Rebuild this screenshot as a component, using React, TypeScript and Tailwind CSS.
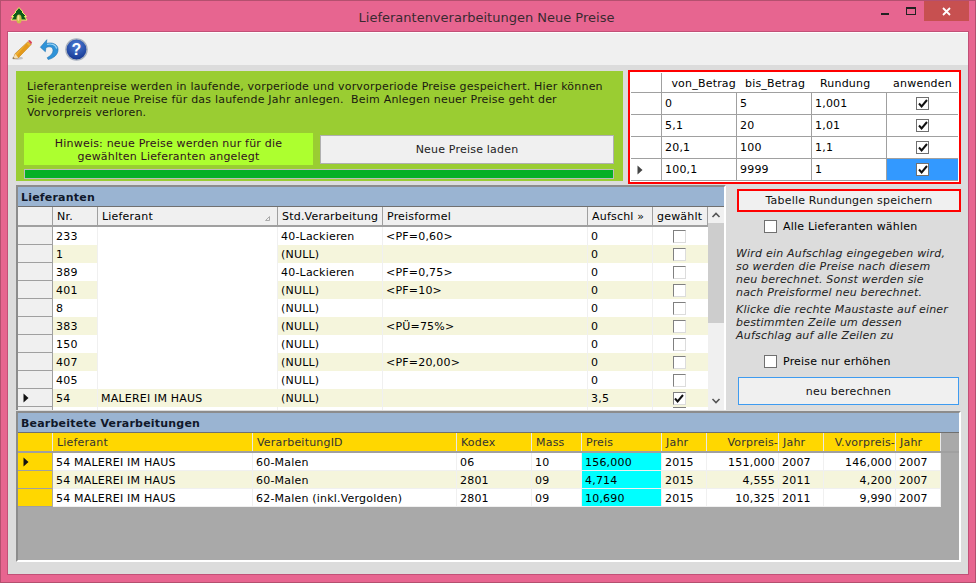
const lieferanten = [
  { nr: "233", name: "", std: "40-Lackieren", formel: "<PF=0,60>", auf: "0" },
  { nr: "1", name: "", std: "(NULL)", formel: "", auf: "0" },
  { nr: "389", name: "", std: "40-Lackieren", formel: "<PF=0,75>", auf: "0" },
  { nr: "401", name: "", std: "(NULL)", formel: "<PF=10>", auf: "0" },
  { nr: "8", name: "", std: "(NULL)", formel: "", auf: "0" },
  { nr: "383", name: "", std: "(NULL)", formel: "<PÜ=75%>", auf: "0" },
  { nr: "150", name: "", std: "(NULL)", formel: "", auf: "0" },
  { nr: "407", name: "", std: "(NULL)", formel: "<PF=20,00>", auf: "0" },
  { nr: "405", name: "", std: "(NULL)", formel: "", auf: "0" },
  { nr: "54", name: "MALEREI IM HAUS", std: "(NULL)", formel: "", auf: "3,5", checked: true },
];

const rundungen = [
  ["0", "5", "1,001"],
  ["5,1", "20", "1,01"],
  ["20,1", "100", "1,1"],
  ["100,1", "9999", "1"],
];

const verarbeitungen = [
  ["54 MALEREI IM HAUS", "60-Malen", "06", "10", "156,000", "2015", "151,000", "2007", "146,000", "2007"],
  ["54 MALEREI IM HAUS", "60-Malen", "2801", "09", "4,714", "2015", "4,555", "2011", "4,200", "2007"],
  ["54 MALEREI IM HAUS", "62-Malen (inkl.Vergolden)", "2801", "09", "10,690", "2015", "10,325", "2011", "9,990", "2007"],
];

const verarbHead = ["Lieferant", "VerarbeitungID", "Kodex", "Mass", "Preis", "Jahr", "Vorpreis-", "Jahr", "V.vorpreis-", "Jahr"];

function Arrow({ className = "text-[#111]" }: { className?: string }) {
  return (
    <svg width="6" height="10" viewBox="0 0 6 10" className={className}>
      <path d="M0.5 0.5 L5.5 5 L0.5 9.5 Z" fill="currentColor" />
    </svg>
  );
}

function Check() {
  return (
    <svg width="10" height="9" viewBox="0 0 10 9">
      <path d="M1 4.5 L3.6 7.4 L9 1" fill="none" stroke="#111" strokeWidth="2" />
    </svg>
  );
}

function Box({ checked, className = "border-[#707070]" }: { checked?: boolean; className?: string }) {
  return (
    <div className={`flex h-[13px] w-[13px] items-center justify-center border bg-white ${className}`}>
      {checked && <Check />}
    </div>
  );
}

function Logo() {
  return (
    <svg width="18" height="17" viewBox="0 0 18 17">
      <path d="M9 0.5 L13 5 L12 5 L16.5 9.5 L14.5 9.5 L17 13 L1 13 L3.5 9.5 L1.5 9.5 L6 5 L5 5 Z" fill="#0b5a1a" stroke="#f2ee6a" strokeWidth="1" />
      <ellipse cx="9" cy="12" rx="2.6" ry="4.6" fill="#cdbf4a" />
      <ellipse cx="8.4" cy="11" rx="1" ry="3" fill="#efe89a" />
    </svg>
  );
}

function PencilIcon() {
  return (
    <svg width="22" height="23" viewBox="0 0 24 24">
      <ellipse cx="7" cy="21.5" rx="6" ry="1.6" fill="#c4c4c4" />
      <path d="M18.5 3.5 L22 6.5 L8 21 L2.5 22 L4.5 16.5 Z" fill="#f0b030" stroke="#b87a18" strokeWidth="0.7" />
      <path d="M17 5.5 L20 8.5 L8 21 L6 19 Z" fill="#e39a1c" />
      <path d="M4.5 16.5 L8 21 L2.5 22 Z" fill="#f3dfb4" />
      <path d="M2.9 20.5 L4 21.7 L2.5 22 Z" fill="#333" />
      <path d="M18.5 2.5 L20.5 1.5 L23 4 L22 6.5 Z" fill="#d9455a" />
    </svg>
  );
}

function UndoIcon() {
  return (
    <svg width="20" height="23" viewBox="0 0 22 24">
      <path d="M1.5 9.5 L7 14.5 L7.6 10 C11 8.2 15.4 9 15.4 12.8 C15.4 16.6 12.4 19 9 21 L10 23 C15.5 22 21 18 21 12 C21 5.6 13.5 3.6 8.2 5.4 L8.6 1.2 Z" fill="#2f93d8" stroke="#1b6fae" strokeWidth="0.6" />
      <path d="M9 6.4 C13 5 18.6 6.6 19.4 11" fill="none" stroke="#9fd6f5" strokeWidth="1.2" />
    </svg>
  );
}

function HelpIcon() {
  return (
    <svg width="23" height="23" viewBox="0 0 23 23">
      <defs>
        <radialGradient id="helpFill" cx="50%" cy="30%" r="75%">
          <stop offset="0%" stopColor="#4d7fd6" />
          <stop offset="100%" stopColor="#10308c" />
        </radialGradient>
      </defs>
      <circle cx="11.5" cy="11.5" r="10.6" fill="url(#helpFill)" stroke="#a8b0bd" strokeWidth="1.4" />
      <text x="11.5" y="17" textAnchor="middle" fontSize="16" fontWeight="700" fill="#fff" fontFamily="Liberation Sans, sans-serif">?</text>
    </svg>
  );
}

function RundungenTable() {
  const cols = "grid grid-cols-[31px_75px_75px_75px_71px]";
  return (
    <div className="h-[114px] w-[333px] border-2 border-[#ff0000] bg-white p-[1px]">
      <div className={`${cols} h-[20px] border-b border-[#a0a0a0]`}>
        <div className="border-r border-[#a0a0a0]" />
        <div className="flex items-center justify-end pr-[1px] pt-[1px]">von_Betrag</div>
        <div className="flex items-center pl-[8px] pt-[1px]">bis_Betrag</div>
        <div className="flex items-center pl-[8px] pt-[1px]">Rundung</div>
        <div className="flex items-center justify-center pt-[1px]">anwenden</div>
      </div>
      {rundungen.map((row, i) => (
        <div key={i} className={`${cols} h-[22px] border-b border-[#a0a0a0]`}>
          <div className="flex items-center border-r border-[#a0a0a0] pl-[6px]">
            {i === 3 && <Arrow className="text-[#444]" />}
          </div>
          {row.map((v, j) => (
            <div key={j} className="flex items-center border-r border-[#a0a0a0] pl-[3px]">{v}</div>
          ))}
          <div className={`flex items-center justify-center ${i === 3 ? "bg-[#3399ff]" : ""}`}>
            <Box checked />
          </div>
        </div>
      ))}
    </div>
  );
}

function LieferantenGrid() {
  const cols = "grid grid-cols-[35px_45px_180px_105px_205px_65px_55px]";
  const head = ["Nr.", "Lieferant", "Std.Verarbeitung", "Preisformel", "Aufschl »", "gewählt"];
  return (
    <div className="h-[225px] w-[710px] overflow-hidden border-2 border-b-0 border-[#8c8c8c] border-r-white bg-white">
      <div className="flex h-[20px] items-center border-b border-[#707070] bg-[#9ab4d2] pl-[3px] pt-[1px] font-bold text-[#10182a]">Lieferanten</div>
      <div className="flex h-[203px]">
        <div className="w-[690px] overflow-hidden">
          <div className={`${cols} h-[20px] border-b-2 border-[#a0a0a0] bg-[#f0f0f0]`}>
            <div className="border-r border-[#a0a0a0]" />
            {head.map((h, i) => (
              <div key={h} className="flex items-center whitespace-nowrap border-r border-[#a0a0a0] pl-[4px]">
                {h}
                {i === 1 && (
                  <svg width="5" height="5" viewBox="0 0 5 5" className="ml-auto mr-[7px] mt-[5px]">
                    <path d="M4.5 0.5 L4.5 4.5 L0.5 4.5 Z" fill="none" stroke="#aaa" strokeWidth="1" />
                  </svg>
                )}
              </div>
            ))}
          </div>
          {lieferanten.map((r, i) => (
            <div key={i} className={`${cols} h-[18px] ${i % 2 ? "bg-[#f5f5dc]" : "bg-white"}`}>
              <div className="flex items-center border-b border-r border-[#a0a0a0] bg-[#f0f0f0] pl-[5px]">
                {i === 9 && <Arrow />}
              </div>
              <div className="flex items-center border-r border-[#f0f0f0] pl-[3px]">{r.nr}</div>
              <div className="flex items-center border-r border-[#f0f0f0] bg-white pl-[3px]">
                {r.name ? <span className="-mx-[3px] flex h-full w-[180px] items-center bg-[#f5f5dc] pl-[3px]">{r.name}</span> : null}
              </div>
              <div className="flex items-center border-r border-[#f0f0f0] pl-[3px]">{r.std}</div>
              <div className="flex items-center border-r border-[#f0f0f0] pl-[3px]">{r.formel}</div>
              <div className="flex items-center border-r border-[#f0f0f0] pl-[3px]">{r.auf}</div>
              <div className="flex items-center justify-center pr-[3px]">
                <Box checked={r.checked} className="border-[#808080] border-b-[#dcdcdc] border-r-[#dcdcdc]" />
              </div>
            </div>
          ))}
          <div className={`${cols} h-[4px] bg-white`}>
            <div className="border-r border-[#a0a0a0] bg-[#f0f0f0]" />
            <div className="border-r border-[#f0f0f0]" />
            <div className="border-r border-[#f0f0f0]" />
            <div className="border-r border-[#f0f0f0]" />
            <div className="border-r border-[#f0f0f0]" />
            <div className="border-r border-[#f0f0f0]" />
            <div className="flex justify-center pr-[3px]"><div className="h-[4px] w-[13px] border-t border-[#808080]" /></div>
          </div>
        </div>
        <div className="flex w-[16px] flex-col items-center bg-[#f0f0f0]">
          <svg width="10" height="16" viewBox="0 0 10 16"><path d="M1.5 10 L5 6.5 L8.5 10" fill="none" stroke="#555" strokeWidth="1.6" /></svg>
          <div className="h-[100px] w-full bg-[#cdcdcd]" />
          <div className="flex-1" />
          <svg width="10" height="18" viewBox="0 0 10 18"><path d="M1.5 7 L5 10.5 L8.5 7" fill="none" stroke="#555" strokeWidth="1.6" /></svg>
        </div>
      </div>
    </div>
  );
}

function VerarbeitungenGrid() {
  const cols = "grid grid-cols-[35px_200px_204px_75px_50px_80px_45px_72px_45px_72px_45px]";
  return (
    <div className="flex h-[151px] w-[945px] flex-col border-2 border-[#8c8c8c] border-b-white border-r-white bg-[#a9a9a9]">
      <div className="flex h-[20px] shrink-0 items-center border-b border-[#707070] bg-[#9ab4d2] pl-[3px] pt-[1px] font-bold text-[#10182a]">Bearbeitete Verarbeitungen</div>
      <div className={`${cols} h-[20px] border-b-2 border-[#a0a0a0] bg-[#a9a9a9]`}>
        <div className="border-r border-[#e8e8e8] bg-[#ffd700]" />
        {verarbHead.map((h, i) => (
          <div key={i} className={`flex items-center whitespace-nowrap border-r border-[#e8e8e8] bg-[#ffd700] pt-[1px] text-[#333] ${h.endsWith("-") ? "justify-end" : "pl-[4px]"}`}>{h}</div>
        ))}
      </div>
      {verarbeitungen.map((row, i) => (
        <div key={i} className={`${cols} h-[18px]`}>
          <div className="mr-[1px] flex items-center border-b border-[#a0a0a0] bg-[#ffd700] pl-[5px]">
            {i === 0 && <Arrow />}
          </div>
          {row.map((v, j) => {
            const right = j === 6 || j === 8;
            const bg = j === 4 ? "bg-[#00ffff]" : i % 2 ? "bg-[#f5f5dc]" : "bg-white";
            return (
              <div key={j} className={`flex items-center border-b border-r border-[#f0f0f0] pt-[1px] ${bg} ${right ? "justify-end pr-[3px]" : "pl-[3px]"}`}>{v}</div>
            );
          })}
        </div>
      ))}
    </div>
  );
}

export default function App() {
  return (
    <div className="flex h-[583px] w-[976px] flex-col overflow-hidden border border-[#b4506f] bg-[#e76590] font-['DejaVu_Sans',sans-serif] text-[11px] leading-[13px] tracking-[0.2px] text-black">
      <div className="flex h-[30px] shrink-0 items-start">
        <div className="ml-[9px] mt-[6px]"><Logo /></div>
        <div className="flex-1 pl-[74px] pt-[9px] text-center text-[13px] leading-[15px] tracking-normal text-[#3a2a30]">Lieferantenverarbeitungen Neue Preise</div>
        <div className="mr-[1px] flex items-start">
          <div className="flex h-[20px] w-[27px] items-end justify-center pb-[6px]"><div className="h-[2px] w-[8px] bg-[#222]" /></div>
          <div className="flex h-[20px] w-[26px] items-center justify-center"><div className="h-[8px] w-[10px] border border-t-2 border-[#222]" /></div>
          <div className="flex h-[20px] w-[45px] items-center justify-center bg-[#c75050]">
            <svg width="9" height="9" viewBox="0 0 9 9"><path d="M1 1 L8 8 M8 1 L1 8" stroke="#fff" strokeWidth="1.8" /></svg>
          </div>
          <div className="w-[5px]" />
        </div>
      </div>
      <div className="mx-[6px] flex h-[544px] flex-col border border-[#c25077] bg-[#dcdcdc]">
        <div className="flex h-[33px] shrink-0 items-center gap-[6px] border-t border-white bg-[#f0f0f0] pl-[3px]">
          <PencilIcon />
          <UndoIcon />
          <HelpIcon />
        </div>
        <div className="flex pl-[8px] pt-[5px]">
          <div className="mr-[5px] mt-[1px] h-[110px] w-[607px] bg-[#9acd32] px-[8px] pt-[9px]">
            <p className="w-[590px] pl-[3px] text-[#1a1a10]">
              Lieferantenpreise werden in laufende, vorperiode und vorvorperiode Preise gespeichert. Hier können Sie jederzeit neue Preise für das laufende Jahr anlegen.&nbsp; Beim Anlegen neuer Preise geht der Vorvorpreis verloren.
            </p>
            <div className="mt-[14px] flex items-center gap-[7px]">
              <div className="flex h-[32px] w-[289px] items-center justify-center bg-[#adff2f] pt-[1px] text-center text-[#301020]">
                <span>Hinweis: neue Preise werden nur für die<br />gewählten Lieferanten angelegt</span>
              </div>
              <button className="h-[29px] w-[294px] border border-[#b0b0b0] bg-[#f0f0f0] pt-[1px] text-[#222]">Neue Preise laden</button>
            </div>
            <div className="mt-[4px] h-[10px] w-[590px] border border-[#bcbcbc] bg-[#06b025]" />
          </div>
          <RundungenTable />
        </div>
        <div className="flex pl-[8px] pt-[1px]">
          <LieferantenGrid />
          <div className="ml-[11px] flex w-[224px] flex-col pt-[4px]">
            <button className="h-[23px] w-full border-2 border-[#ff0000] bg-[#f0f0f0] text-[#111]">Tabelle Rundungen speichern</button>
            <div className="mt-[7px] flex items-center pl-[27px] pt-[1px]">
              <Box />
              <span className="ml-[6px]">Alle Lieferanten wählen</span>
            </div>
            <div className="-ml-[1px] mt-[14px] italic text-[#222]">
              Wird ein Aufschlag eingegeben wird,<br />so werden die Preise nach diesem<br />neu berechnet. Sonst werden sie<br />nach Preisformel neu berechnet.
            </div>
            <div className="-ml-[1px] mt-[4px] italic text-[#222]">
              Klicke die rechte Maustaste auf einer<br />bestimmten Zeile um dessen<br />Aufschlag auf alle Zeilen zu
            </div>
            <div className="mt-[13px] flex items-center pl-[27px]">
              <Box />
              <span className="ml-[6px]">Preise nur erhöhen</span>
            </div>
            <button className="ml-[1px] mt-[9px] h-[28px] w-[221px] border border-[#3e9bf0] bg-[#f0f0f0] text-[#111]">neu berechnen</button>
          </div>
        </div>
        <div className="pl-[8px] pt-[1px]">
          <VerarbeitungenGrid />
        </div>
      </div>
    </div>
  );
}
